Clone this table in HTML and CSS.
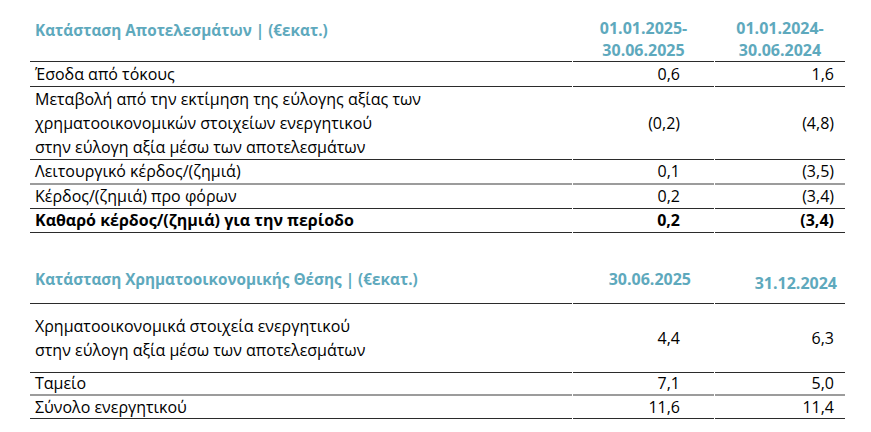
FILE: index.html
```html
<!DOCTYPE html>
<html lang="el">
<head>
<meta charset="utf-8">
<link rel="stylesheet" href="styles.css">
</head>
<body>
<div class="page">
  <table class="fin t1">
    <colgroup><col class="c1"><col class="c2"><col class="c3"></colgroup>
    <thead>
      <tr class="head">
        <th class="label">Κατάσταση Αποτελεσμάτων | (€εκατ.)</th>
        <th class="period">01.01.2025-<br>30.06.2025</th>
        <th class="period">01.01.2024-<br>30.06.2024</th>
      </tr>
    </thead>
    <tbody>
      <tr class="dark"><td>Έσοδα από τόκους</td><td class="v2">0,6</td><td class="v3">1,6</td></tr>
      <tr class="dark multi"><td>Μεταβολή από την εκτίμηση της εύλογης αξίας των<br>χρηματοοικονομικών στοιχείων ενεργητικού<br>στην εύλογη αξία μέσω των αποτελεσμάτων</td><td class="v2">(0,2)</td><td class="v3">(4,8)</td></tr>
      <tr class="gray"><td>Λειτουργικό κέρδος/(ζημιά)</td><td class="v2">0,1</td><td class="v3">(3,5)</td></tr>
      <tr class="dark"><td>Κέρδος/(ζημιά) προ φόρων</td><td class="v2">0,2</td><td class="v3">(3,4)</td></tr>
      <tr class="dark bold"><td>Καθαρό κέρδος/(ζημιά) για την περίοδο</td><td class="v2">0,2</td><td class="v3">(3,4)</td></tr>
    </tbody>
  </table>

  <table class="fin t2">
    <colgroup><col class="c1"><col class="c2"><col class="c3"></colgroup>
    <thead>
      <tr class="head2">
        <th class="label">Κατάσταση Χρηματοοικονομικής Θέσης | (€εκατ.)</th>
        <th class="date2">30.06.2025</th>
        <th class="date3">31.12.2024</th>
      </tr>
    </thead>
    <tbody>
      <tr class="dark multi2"><td>Χρηματοοικονομικά στοιχεία ενεργητικού<br>στην εύλογη αξία μέσω των αποτελεσμάτων</td><td class="v2">4,4</td><td class="v3">6,3</td></tr>
      <tr class="gray"><td>Ταμείο</td><td class="v2">7,1</td><td class="v3">5,0</td></tr>
      <tr class="dark"><td>Σύνολο ενεργητικού</td><td class="v2">11,6</td><td class="v3">11,4</td></tr>
    </tbody>
  </table>
</div>
</body>
</html>
```

FILE: styles.css
```css
html, body {
  margin: 0;
  padding: 0;
  background: #ffffff;
}

body {
  font-family: "Open Sans", "Noto Sans", sans-serif;
  font-size: 16px;
  color: #000000;
}

.page {
  padding: 17px 0 0 30px;
}

.fin {
  width: 815px;
  border-collapse: separate;
  border-spacing: 1px 0;
  margin-left: -1px;
  table-layout: fixed;
}

.c1 { width: 542px; }
.c2 { width: 141px; }
.c3 { width: 130px; }

.fin th {
  color: #5ea9bd;
  font-weight: 700;
  font-size: 16px;
  line-height: 22px;
  padding: 0;
}

.fin th.label {
  font-size: 15.3px;
  text-align: left;
  padding-left: 5px;
  vertical-align: top;
}

.head th.label {
  padding-top: 2px;
}

.fin td {
  padding: 0 0 0 5px;
  line-height: 23px;
  vertical-align: middle;
}

.head th {
  vertical-align: bottom;
  border-bottom: 1px solid #2b2b2b;
  padding-bottom: 0;
}

.head th.period {
  text-align: center;
}

.fin td.v2 {
  text-align: right;
  padding-right: 34px;
}

.fin td.v3 {
  text-align: right;
  padding-right: 11px;
}

.dark td { border-bottom: 1px solid #2b2b2b; }
.gray td { border-bottom: 2px solid #9c9c9c; }

.t1 tbody tr:first-child td { height: 24px; }
.t1 .multi td { line-height: 24px; }
.bold td { font-weight: 700; height: 22px; }

.t2 {
  margin-top: 35px;
}

.head2 th {
  border-bottom: 1px solid #2b2b2b;
  height: 29px;
  padding-bottom: 2px;
}

.head2 th.date2 {
  text-align: right;
  vertical-align: top;
  padding-right: 23px;
}

.head2 th.date3 {
  text-align: right;
  vertical-align: top;
  padding-top: 4px;
  padding-right: 8px;
}

.multi2 td {
  line-height: 24px;
  padding-top: 10px;
  padding-bottom: 10px;
}

.t2 .gray td { line-height: 21px; }
.t2 .dark:not(.multi2) td { line-height: 22px; }
```
